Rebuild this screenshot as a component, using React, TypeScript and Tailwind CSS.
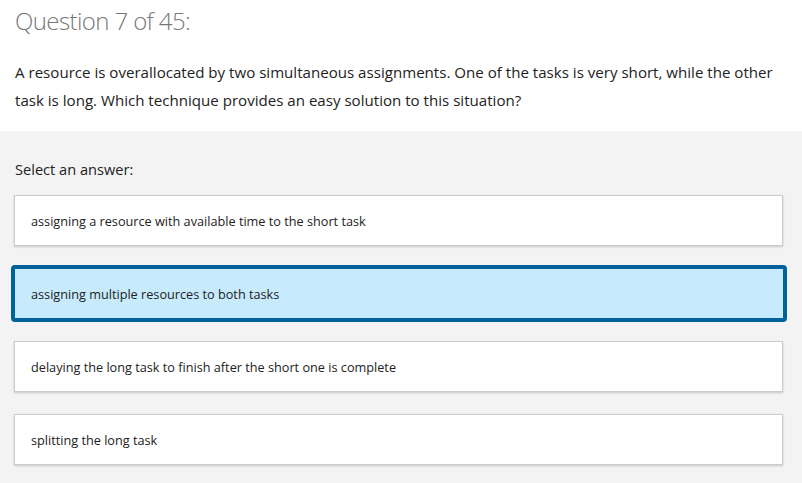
import React from "react";

const answers = [
  "assigning a resource with available time to the short task",
  "assigning multiple resources to both tasks",
  "delaying the long task to finish after the short one is complete",
  "splitting the long task",
];

export default function App() {
  const selected = 1;
  return (
    <div
      className="w-[802px] h-[483px] overflow-hidden bg-[#f3f3f3]"
      style={{ fontFamily: '"Open Sans", "Noto Sans", sans-serif' }}
    >
      <div className="bg-white px-[15px] pt-[6px] pb-[17px]">
        <h1 className="text-[24px] leading-[30px] font-light text-[#777777] tracking-[-0.6px]">
          Question 7 of 45:
        </h1>
        <p className="mt-[22px] text-[15.1px] leading-[28px] text-[#222222]">
          A resource is overallocated by two simultaneous assignments. One of the tasks is very short, while the other
          task is long. Which technique provides an easy solution to this situation?
        </p>
      </div>
      <div className="pt-[28px] pl-[14px] pr-[19px]">
        <div className="pl-[1px] text-[14.6px] leading-[20px] text-[#222222]">Select an answer:</div>
        <div className="mt-[16px] flex flex-col gap-[22px]">
          {answers.map((a, i) =>
            i === selected ? (
              <div
                key={i}
                className="-mx-[3px] -my-[3px] mr-[-4px] h-[57px] flex items-center border-4 border-[#00629b] rounded-[4px] bg-[#c7ebfd] pl-[16px] pt-[3px] text-[12.7px] text-[#222222]"
              >
                {a}
              </div>
            ) : (
              <div
                key={i}
                className="h-[51px] flex items-center bg-white border border-[#cccccc] shadow-[0_1px_2px_rgba(0,0,0,0.18)] pl-[16px] pt-[3px] text-[12.7px] text-[#222222]"
              >
                {a}
              </div>
            )
          )}
        </div>
      </div>
    </div>
  );
}
